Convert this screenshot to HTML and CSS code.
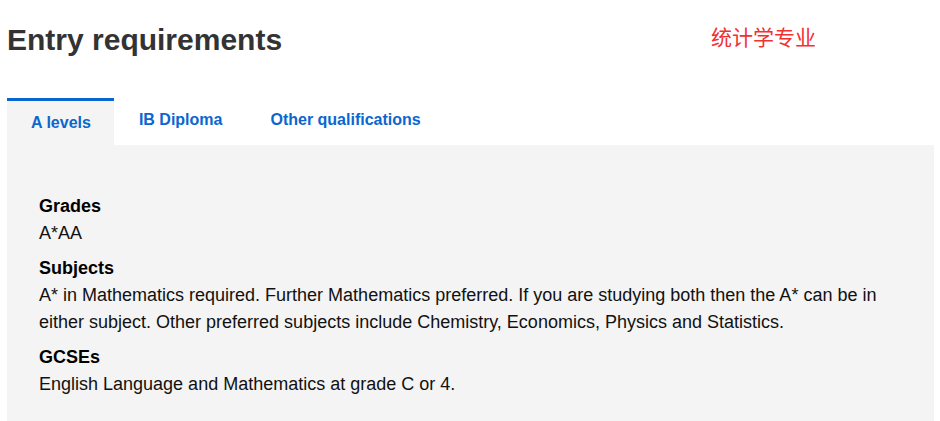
FILE: index.html
```
<!DOCTYPE html>
<html lang="en">
<head>
<meta charset="utf-8">
<title>Entry requirements</title>
<link rel="stylesheet" href="styles.css">
</head>
<body>
<div class="page">
  <h1 class="title">Entry requirements</h1>
  <span class="tag">统计学专业</span>
  <div class="tabs">
    <div class="tab tab-active">A levels</div>
    <div class="tab">IB Diploma</div>
    <div class="tab">Other qualifications</div>
  </div>
  <div class="panel">
    <dl class="reqs">
      <dt class="req-title">Grades</dt>
      <dd class="req-text">A*AA</dd>
      <dt class="req-title">Subjects</dt>
      <dd class="req-text">A* in Mathematics required. Further Mathematics preferred. If you are studying both then the A* can be in either subject. Other preferred subjects include Chemistry, Economics, Physics and Statistics.</dd>
      <dt class="req-title">GCSEs</dt>
      <dd class="req-text">English Language and Mathematics at grade C or 4.</dd>
    </dl>
  </div>
</div>
</body>
</html>
```
FILE: styles.css
```
html, body {
  margin: 0;
  padding: 0;
  background: #fff;
}
body {
  font-family: "Liberation Sans", Arial, sans-serif;
  color: #111;
}
.page {
  position: relative;
  padding: 22px 6px 1px 7px;
}
.title {
  margin: 0;
  font-size: 30px;
  line-height: 36px;
  font-weight: bold;
  color: #333;
}
.tag {
  position: absolute;
  left: 711px;
  top: 26px;
  font-family: "Noto Sans CJK SC", sans-serif;
  font-size: 21px;
  line-height: 1;
  color: #f23030;
}
.tabs {
  display: flex;
  margin-top: 40px;
}
.tab {
  padding: 12px 23px 15px 25px;
  font-size: 16px;
  line-height: 20px;
  font-weight: bold;
  color: #0b66cf;
}
.tab-active {
  background: #f4f4f4;
  border-top: 3px solid #0766d1;
  padding: 12px 23px 12px 24px;
}
.panel {
  background: #f4f4f4;
  padding: 48px 32px 23px;
}
.reqs {
  margin: 0;
}
.req-title {
  margin: 8px 0 0;
  font-size: 18px;
  line-height: 27px;
  font-weight: bold;
  color: #000;
}
.req-title:first-child {
  margin-top: 0;
}
.req-text {
  margin: 0;
  font-size: 18px;
  line-height: 27px;
  color: #111;
}
```
